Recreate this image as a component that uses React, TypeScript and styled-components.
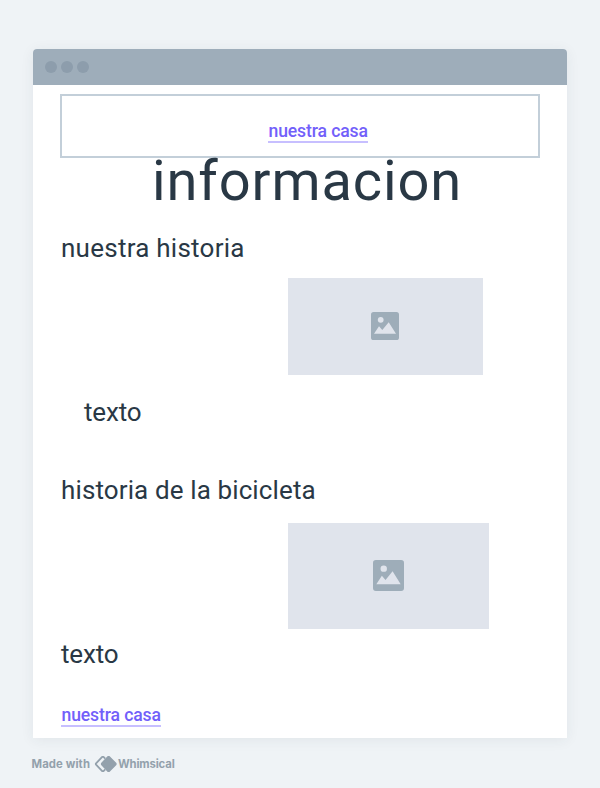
import React from "react";
import styled, { createGlobalStyle } from "styled-components";

const GlobalStyle = createGlobalStyle`
  *, *::before, *::after { box-sizing: border-box; }
  body {
    margin: 0;
    background: #eff3f6;
    color: #293845;
    font-family: Roboto, "Liberation Sans", sans-serif;
  }
`;

const Page = styled.div`
  height: 788px;
  padding: 49px 33px 0;
  overflow: hidden;
`;

const Window = styled.main`
  width: 533.5px;
  height: 689px;
  border-radius: 4px 4px 0 0;
  background: #fff;
  box-shadow: 0 2px 14px rgba(41, 56, 69, 0.07);
`;

const TitleBar = styled.header`
  display: flex;
  align-items: center;
  gap: 4px;
  height: 36px;
  padding: 0 12px;
  border-radius: 4px 4px 0 0;
  background: #9eadba;
`;

const Dot = styled.span`
  width: 12px;
  height: 12px;
  border-radius: 50%;
  background: #8d9dac;
`;

const Content = styled.div`
  display: flex;
  flex-direction: column;
  align-items: flex-start;
  padding: 9px 27px 0 28px;
`;

const Nav = styled.nav`
  width: 479.5px;
  height: 64px;
  margin-left: -1px;
  padding: 24px 0 0 206px;
  border: 2px solid #c3cfd9;
`;

const Link = styled.a<{ $top?: number }>`
  display: block;
  width: 100px;
  height: 23px;
  margin-top: ${(p) => p.$top ?? 0}px;
  padding-left: 0.5px;
  border-bottom: 2px solid #c7bfff;
  color: #7260fa;
  font-size: 17.6px;
  font-weight: 500;
  line-height: 23px;
  letter-spacing: -0.13px;
  white-space: nowrap;
`;

const Title = styled.h1`
  margin: -9px 0 0 91px;
  font-size: 56px;
  font-weight: 400;
  line-height: 64px;
  letter-spacing: 0.9px;
`;

const Heading = styled.h2<{ $top: number; $tracking: number }>`
  margin: ${(p) => p.$top}px 0 0;
  font-size: 26px;
  font-weight: 450;
  line-height: 32px;
  letter-spacing: ${(p) => p.$tracking}px;
  white-space: nowrap;
`;

const Text = styled.p<{ $top: number; $indent?: number }>`
  margin: ${(p) => p.$top}px 0 0 ${(p) => p.$indent ?? 0}px;
  font-size: 26px;
  font-weight: 450;
  line-height: 32px;
  letter-spacing: -0.15px;
`;

const Picture = styled.div<{ $top: number; $width: number; $height: number }>`
  display: flex;
  align-items: center;
  justify-content: center;
  width: ${(p) => p.$width}px;
  height: ${(p) => p.$height}px;
  margin: ${(p) => p.$top}px 0 0 227px;
  padding: 0 1px 1px 0;
  background: #e0e4ec;
`;

const Credit = styled.footer`
  display: flex;
  align-items: center;
  height: 18px;
  margin: 17px 0 0 -1.5px;
  color: #93a1ac;
  font-family: Inter, "Liberation Sans", sans-serif;
  font-size: 11.3px;
  font-weight: 700;
  line-height: 18px;
  white-space: nowrap;
`;

const MadeWith = styled.span`
  width: 62.5px;
  letter-spacing: 0.12px;
`;

const Logo = styled.svg`
  width: 24px;
  height: 18px;
  flex: none;
`;

const Brand = styled.span`
  letter-spacing: -0.15px;
`;

function ImageIcon({ size }: { size: number }) {
  return (
    <svg width={size} height={size} viewBox="0 0 28 28">
      <rect width="28" height="28" rx="2.6" fill="#9eadb9" />
      <circle cx="9.7" cy="7.8" r="2.9" fill="#e0e4ec" />
      <path d="M3 21.8 L8 14.2 L11.3 18 L17.7 10.2 L25 21.8 Z" fill="#e0e4ec" />
    </svg>
  );
}

export default function App() {
  return (
    <>
      <GlobalStyle />
      <Page>
        <Window>
          <TitleBar>
            <Dot />
            <Dot />
            <Dot />
          </TitleBar>
          <Content>
            <Nav>
              <Link>nuestra casa</Link>
            </Nav>
            <Title>informacion</Title>
            <Heading $top={19} $tracking={0.25}>nuestra historia</Heading>
            <Picture $top={14} $width={195} $height={97}>
              <ImageIcon size={28} />
            </Picture>
            <Text $top={21} $indent={23}>texto</Text>
            <Heading $top={46} $tracking={0.12}>historia de la bicicleta</Heading>
            <Picture $top={17} $width={201} $height={106}>
              <ImageIcon size={31} />
            </Picture>
            <Text $top={9}>texto</Text>
            <Link $top={34}>nuestra casa</Link>
          </Content>
        </Window>
        <Credit>
          <MadeWith>Made with</MadeWith>
          <Logo viewBox="0 0 24 18">
            <path
              d="M11.2 3.6 L9.5 1.9 H8.2 L1.8 8.7 V9.3 L8.2 16.1 H9.5 L11.2 14.4"
              fill="none"
              stroke="currentColor"
              strokeWidth="1.8"
              strokeLinejoin="round"
            />
            <path
              d="M14 1.8 H15.2 L21.9 8.6 V9.4 L15.2 16.2 H14 L7.6 9.4 V8.6 Z"
              fill="currentColor"
              stroke="currentColor"
              strokeWidth="1.4"
              strokeLinejoin="round"
            />
          </Logo>
          <Brand>Whimsical</Brand>
        </Credit>
      </Page>
    </>
  );
}
